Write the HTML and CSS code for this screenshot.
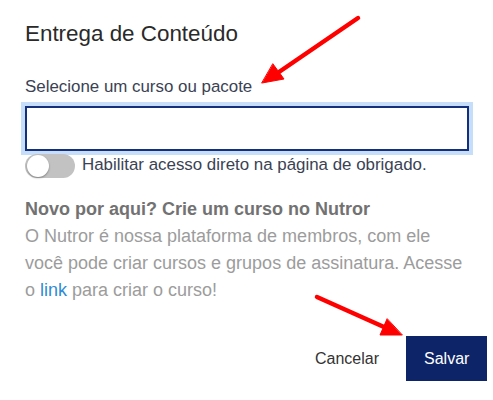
FILE: index.html
```html
<!DOCTYPE html>
<html lang="pt-BR">
<head>
<meta charset="utf-8">
<title>Entrega de Conteúdo</title>
<link rel="stylesheet" href="styles.css">
</head>
<body>
<div class="dialog">
  <h1 class="title">Entrega de Conteúdo</h1>
  <label class="field-label" for="curso">Selecione um curso ou pacote</label>
  <input class="field-input" id="curso" type="text">
  <div class="toggle-row">
    <span class="toggle"><span class="knob"></span></span>
    <span class="toggle-text">Habilitar acesso direto na página de obrigado.</span>
  </div>
  <div class="info">
    <p class="info-title">Novo por aqui? Crie um curso no Nutror</p>
    <p class="info-text">O Nutror é nossa plataforma de membros, com ele você pode criar cursos e grupos de assinatura. Acesse o <a class="link" href="#">link</a> para criar o curso!</p>
  </div>
  <div class="footer">
    <button class="btn btn-cancel" type="button">Cancelar</button>
    <button class="btn btn-save" type="button">Salvar</button>
  </div>
</div>
<svg class="arrows" width="493" height="400" viewBox="0 0 493 400">
  <g stroke="#ff0000" stroke-width="4.5" stroke-linecap="round" fill="#ff0000">
    <line x1="358" y1="18" x2="279" y2="72"/>
    <polygon points="262,83 284,79 273,64" stroke-width="1" stroke-linejoin="round"/>
    <line x1="317" y1="297" x2="384" y2="327"/>
    <polygon points="402,335 380,335 387,319" stroke-width="1" stroke-linejoin="round"/>
  </g>
</svg>
</body>
</html>
```
FILE: styles.css
```css
html, body {
  margin: 0;
  padding: 0;
  background: #ffffff;
}

body {
  font-family: "Liberation Sans", Arial, sans-serif;
  width: 493px;
  height: 400px;
  overflow: hidden;
  position: relative;
}

.dialog {
  padding: 19px 6px 0 25px;
  display: flex;
  flex-direction: column;
  align-items: flex-start;
}

.title {
  margin: 0;
  font-size: 22.4px;
  line-height: 30px;
  font-weight: normal;
  color: #2a2a2a;
}

.field-label {
  margin-top: 28px;
  font-size: 16.9px;
  line-height: 20px;
  color: #3a4254;
}

.field-input {
  box-sizing: border-box;
  margin: 9px 0 0 0;
  width: 444px;
  height: 45px;
  border: 2px solid #14307c;
  box-shadow: 0 0 0 4px #c6defa;
  outline: none;
  padding: 0 10px;
  background: #ffffff;
}

.toggle-row {
  margin-top: 3px;
  display: flex;
  align-items: center;
  gap: 7px;
}

.toggle {
  position: relative;
  width: 50px;
  height: 24px;
  border-radius: 12px;
  background: #c2c2c2;
  flex: none;
}

.knob {
  position: absolute;
  left: 2px;
  top: 1px;
  width: 22px;
  height: 22px;
  border-radius: 50%;
  background: #ffffff;
  box-shadow: 0 1px 2px rgba(0, 0, 0, 0.35);
}

.toggle-text {
  font-size: 16.9px;
  line-height: 22px;
  color: #3a4254;
  position: relative;
  top: -1px;
}

.info {
  margin-top: 18px;
}

.info-title {
  margin: 0;
  font-size: 18px;
  line-height: 27px;
  font-weight: bold;
  color: #727272;
}

.info-text {
  margin: 0;
  width: 444px;
  font-size: 18px;
  line-height: 27px;
  color: #9c9c9c;
}

.link {
  color: #2f8bd6;
  text-decoration: none;
}

.footer {
  align-self: stretch;
  margin-top: 32px;
  display: flex;
  justify-content: flex-end;
  gap: 9px;
}

.btn {
  font-family: "Liberation Sans", Arial, sans-serif;
  font-size: 16px;
  height: 45px;
  padding: 0 18px;
  border: none;
  border-radius: 0;
  cursor: pointer;
}

.btn-cancel {
  background: transparent;
  color: #333333;
}

.btn-save {
  background: #0e2468;
  color: #ffffff;
  width: 81px;
}

.arrows {
  position: absolute;
  left: 0;
  top: 0;
  pointer-events: none;
}
```
